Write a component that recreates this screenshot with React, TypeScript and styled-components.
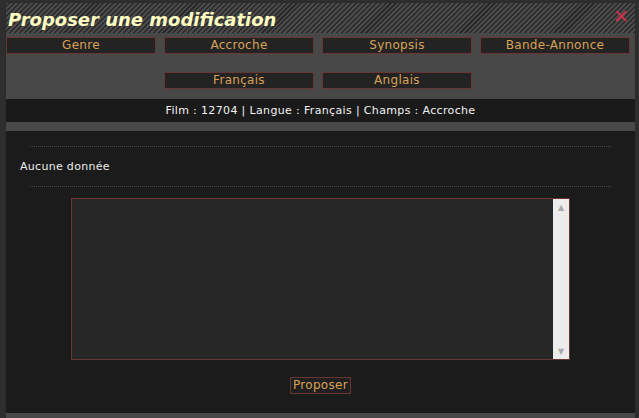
import React from 'react'
import styled, { createGlobalStyle } from 'styled-components'

const GlobalStyle = createGlobalStyle`
    html, body {
        margin: 0;
        padding: 0;
        background: #2e2e2e;
    }
    #root {
        height: 418px;
    }
`

const Page = styled.div`
    height: 418px;
    padding: 2px 3px 0 5px;
    box-sizing: border-box;
    overflow: hidden;
    font-family: "DejaVu Sans", Verdana, sans-serif;
`

const Window = styled.div`
    display: flex;
    flex-direction: column;
    height: 100%;
    background: #484848;
    border: 1px solid #2a2a2a;
    border-bottom: 0;
    box-sizing: border-box;
`

const TitleBar = styled.div`
    display: flex;
    flex-direction: row;
    justify-content: space-between;
    align-items: flex-start;
    height: 30px;
    padding: 0 6px 0 2px;
    background: repeating-linear-gradient(
        135deg,
        #4a4a4a 0px,
        #4a4a4a 2px,
        #2a2a2a 2px,
        #2a2a2a 3.5px
    );
`

const Title = styled.span`
    color: #fffcc2;
    font-size: 18px;
    font-weight: bold;
    font-style: italic;
    line-height: 33px;
`

const Close = styled.span`
    color: #c8304a;
    font-size: 19px;
    line-height: 20px;
    margin-top: 3px;
    font-family: "DejaVu Sans", sans-serif;
`

const ButtonGrid = styled.div`
    display: grid;
    grid-template-columns: repeat(4, 150px);
    column-gap: 8px;
    row-gap: 18px;
    padding: 4px 0 0 0;
`

const TabButton = styled.button<{ col?: number }>`
    grid-column: ${props => props.col ?? 'auto'};
    height: 17px;
    padding: 0;
    margin: 0;
    background: #232323;
    border: 1px solid #6a3535;
    color: #d9a254;
    font-family: "DejaVu Sans", Verdana, sans-serif;
    font-size: 12px;
    letter-spacing: 0.3px;
    line-height: 15px;
    text-align: center;
`

const InfoBar = styled.div`
    margin-top: 10px;
    height: 23px;
    background: #1a1a1a;
    color: #f2f2f2;
    font-size: 11px;
    letter-spacing: 0.35px;
    line-height: 23px;
    text-align: center;
`

const MainPanel = styled.div`
    display: flex;
    flex-direction: column;
    align-items: center;
    flex: 1;
    margin-top: 9px;
    margin-bottom: 5px;
    background: #1b1b1b;
`

const Dotted = styled.div<{ top?: number }>`
    align-self: stretch;
    margin: ${props => props.top ?? 0}px 24px 0 24px;
    border-top: 1px dotted #4a4a4a;
`

const EmptyText = styled.div`
    align-self: stretch;
    padding: 0 14px;
    height: 39px;
    color: #ededed;
    font-size: 11px;
    letter-spacing: 0.3px;
    line-height: 39px;
`

const TextBox = styled.div`
    display: flex;
    flex-direction: row;
    width: 497px;
    height: 160px;
    margin-top: 11px;
    border: 1px solid #6a3535;
    background: #272727;
`

const Area = styled.textarea`
    flex: 1;
    margin: 0;
    padding: 2px;
    border: 0;
    background: transparent;
    color: #eee;
    resize: none;
    outline: none;
`

const Scrollbar = styled.div`
    display: flex;
    flex-direction: column;
    justify-content: space-between;
    align-items: center;
    width: 16px;
    padding: 4px 0 2px 0;
    background: #ececec;
    color: #a9a9a9;
    font-size: 8px;
    line-height: 10px;
`

const SubmitButton = styled.button`
    margin-top: 17px;
    height: 17px;
    padding: 0 2px;
    background: #1f1f1f;
    border: 1px solid #6a3535;
    color: #d9a254;
    font-family: "DejaVu Sans", Verdana, sans-serif;
    font-size: 12px;
    letter-spacing: 0.3px;
    line-height: 15px;
`

const App = () => {
    return (
        <>
            <GlobalStyle />
            <Page>
                <Window>
                    <TitleBar>
                        <Title>Proposer une modification</Title>
                        <Close>✕</Close>
                    </TitleBar>
                    <ButtonGrid>
                        <TabButton>Genre</TabButton>
                        <TabButton>Accroche</TabButton>
                        <TabButton>Synopsis</TabButton>
                        <TabButton>Bande-Annonce</TabButton>
                        <TabButton col={2}>Français</TabButton>
                        <TabButton col={3}>Anglais</TabButton>
                    </ButtonGrid>
                    <InfoBar>Film : 12704 | Langue : Français | Champs : Accroche</InfoBar>
                    <MainPanel>
                        <Dotted top={15} />
                        <EmptyText>Aucune donnée</EmptyText>
                        <Dotted />
                        <TextBox>
                            <Area />
                            <Scrollbar>
                                <span>▲</span>
                                <span>▼</span>
                            </Scrollbar>
                        </TextBox>
                        <SubmitButton>Proposer</SubmitButton>
                    </MainPanel>
                </Window>
            </Page>
        </>
    )
}

export default App
